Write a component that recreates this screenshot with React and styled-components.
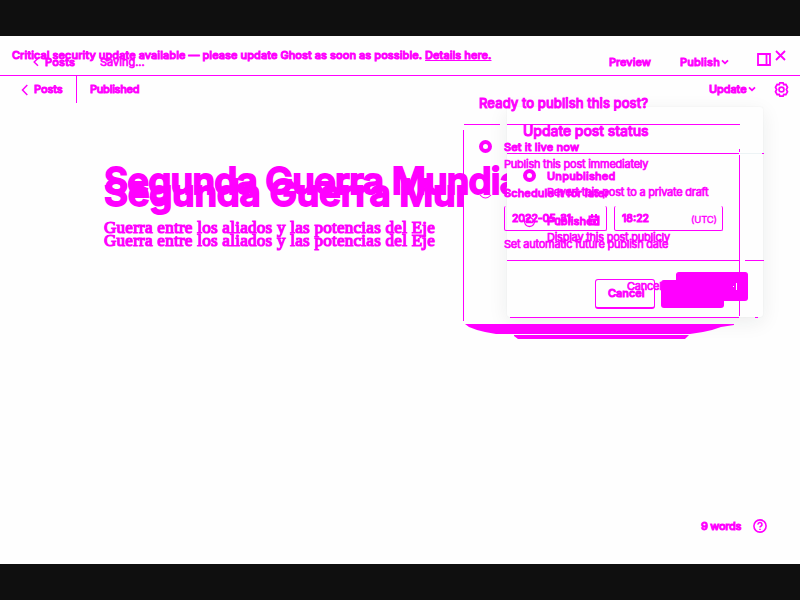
import React from "react";
import styled, { createGlobalStyle } from "styled-components";

const ink = "#ff00ff";

const Global = createGlobalStyle`
  * { box-sizing: border-box; }
  body { margin: 0; background: #fff; overflow: hidden; }
`;

const Page = styled.div`
  width: 800px;
  height: 600px;
  border: solid #0f0f0f;
  border-width: 36px 0;
  background: #fefefe;
  color: ${ink};
  font-family: Inter, "Liberation Sans", sans-serif;
  display: grid;
  overflow: hidden;
`;

const Layer = styled.main`
  grid-area: 1 / 1;
  position: relative;
  width: 800px;
  height: 528px;
  display: flex;
  flex-direction: column;
`;

const Row = styled.div`
  display: flex;
  align-items: center;
  flex: none;
  height: ${(p) => p.$h}px;
  margin-top: ${(p) => p.$mt || 0}px;
  padding-left: ${(p) => p.$x || 0}px;
`;

const Label = styled.span`
  flex: none;
  width: ${(p) => (p.$w ? `${p.$w}px` : "auto")};
  margin-left: ${(p) => p.$ml || 0}px;
  font-size: ${(p) => p.$size || 11}px;
  font-weight: ${(p) => p.$weight || 500};
  letter-spacing: ${(p) => p.$ls ?? 0.1}px;
  -webkit-text-stroke: ${(p) => p.$stroke ?? 0.95}px ${ink};
  line-height: 1;
  white-space: nowrap;
`;

const Hint = styled(Label).attrs({ $weight: 400, $stroke: 0.7, $ls: -0.24 })``;

const Link = styled.a`
  text-decoration: underline;
  text-decoration-thickness: 1px;
  text-underline-offset: 1px;
`;

const Title = styled.h1`
  flex: none;
  width: ${(p) => p.$w}px;
  height: 48px;
  margin: ${(p) => p.$mt}px 0 0 104px;
  overflow: hidden;
  white-space: nowrap;
  font-size: 37px;
  line-height: 48px;
  font-weight: 600;
  letter-spacing: ${(p) => p.$ls}px;
  -webkit-text-stroke: 1.8px ${ink};
`;

const Excerpt = styled.p`
  margin: ${(p) => p.$mt}px 0 0 104px;
  font-family: "Liberation Serif", serif;
  font-size: 17px;
  line-height: 20px;
  letter-spacing: 0.27px;
  white-space: nowrap;
  -webkit-text-stroke: 1.2px ${ink};
`;

const Rule = styled.div`
  flex: none;
  height: 1px;
  width: ${(p) => p.$w}px;
  margin-left: ${(p) => p.$ml || 0}px;
  background: ${(p) => p.$tone || ink};
`;

const Divider = styled.i`
  flex: none;
  align-self: flex-start;
  width: 1px;
  height: 27px;
  background: ${ink};
`;

const Icon = styled.svg`
  flex: none;
  display: block;
  margin-left: ${(p) => p.$ml || 0}px;
  margin-bottom: ${(p) => p.$mb || 0}px;
  fill: none;
  stroke: ${ink};
  stroke-width: ${(p) => p.$sw || 1.5};
`;

const StatusPanel = styled.section`
  position: absolute;
  left: 507px;
  top: 71px;
  width: 256px;
  height: 210px;
  display: flex;
  flex-direction: column;
  background: #fefefe;
  border-radius: 3px;
  box-shadow: 0 5px 20px rgba(20, 35, 35, 0.08), 0 0 2px rgba(20, 35, 35, 0.06);
`;

const PublishPanel = styled.section`
  position: absolute;
  left: 463px;
  top: 54px;
  width: 277px;
  height: 232px;
  display: flex;
  flex-direction: column;
`;

const Edge = styled.i`
  position: absolute;
  width: 1px;
  left: ${(p) => p.$x}px;
  top: ${(p) => p.$y}px;
  height: ${(p) => p.$h}px;
  background: ${ink};
`;

const Shadow = styled.svg`
  position: absolute;
  left: 0;
  top: 233px;
  fill: ${ink};
`;

const Radio = styled.i`
  flex: none;
  width: 13px;
  height: 13px;
  margin-top: ${(p) => p.$lift || 0}px;
  border: 4px solid ${ink};
  border-radius: 50%;
`;

const Field = styled.div`
  flex: none;
  display: flex;
  align-items: center;
  width: ${(p) => p.$w}px;
  height: 25px;
  padding-top: 3px;
  margin-left: ${(p) => p.$ml || 0}px;
  border: 1px solid ${ink};
  border-top: 0;
  border-radius: 2px;
`;

const Button = styled.button`
  flex: none;
  display: flex;
  align-items: center;
  width: ${(p) => p.$w}px;
  height: ${(p) => p.$h || 30}px;
  margin: 0 0 0 ${(p) => p.$ml || 0}px;
  padding: 0;
  color: ${ink};
  font-family: inherit;
  border: 1px solid ${ink};
  border-bottom-width: 2px;
  border-radius: 3px;
  background: ${(p) => (p.$solid ? ink : "transparent")};
`;

const Glint = styled.i`
  width: 1px;
  height: ${(p) => p.$h}px;
  margin-left: ${(p) => p.$ml}px;
  background: #fff;
`;

const Left = ({ big, ...rest }) => (
  <Icon width="8" height="12" viewBox="0 0 8 12" $sw={1.5} {...rest}>
    <path d={big ? "M6.300 1 1.500 6l4.800 5" : "M6 2.300 2.200 6 6 9.700"} />
  </Icon>
);

const Down = (props) => (
  <Icon width="8" height="6" viewBox="0 0 8 6" $sw={1.8} {...props}>
    <path d="m1 1.300 3 3 3-3" />
  </Icon>
);

const StatusScreen = () => (
  <Layer>
    <Row $h={39} $x={12}>
      <Label $w={763} $ls={0.05}>
        Critical security update available — please update Ghost as soon as possible. <Link>Details here.</Link>
      </Label>
      <Icon width="11" height="11" viewBox="0 0 11 11" $sw={1.8}>
        <path d="m1 1 9 9m0-9-9 9" />
      </Icon>
    </Row>
    <Rule $w={800} />
    <Row $h={27} $x={21}>
      <Left big />
      <Label $ml={5} $w={42} $ls={-0.1}>Posts</Label>
      <Divider />
      <Label $ml={13} $w={619} $ls={-0.28}>Published</Label>
      <Label $w={39} $ls={-0.1}>Update</Label>
      <Down $mb={1} />
      <Icon $ml={18} $mb={1} width="15" height="15" viewBox="0 0 14 14" $sw={1.6}>
        <circle cx="7" cy="7" r="2.300" />
        <path d="m5.500.8 3 0 .6 1.600 2-.1 1.500 2.600-1.100 2.100 1.100 2.100-1.500 2.600-2-.1-.6 1.600h-3l-.6-1.600-2 .1-1.500-2.600L2.500 7 1.400 4.900l1.500-2.600 2 .1z" />
      </Icon>
    </Row>
    <Title $mt={54} $w={403} $ls={-0.84}>Segunda Guerra Mundial</Title>
    <Excerpt $mt={13}>Guerra entre los aliados y las potencias del Eje</Excerpt>
    <Row $mt={280} $h={16} $x={701}>
      <Label $w={52} $ls={-0.3}>9 words</Label>
      <Icon width="14" height="14" viewBox="0 0 14 14" $sw={1.6}>
        <circle cx="7" cy="7" r="6.100" />
        <path d="M5 5.600a2 2 0 1 1 2.900 1.700Q7 7.800 7 8.600M7 9.800v1.200" />
      </Icon>
    </Row>
    <StatusPanel>
      <Row $mt={1} $h={45} $x={16}>
        <Label $size={14} $ls={-0.05}>Update post status</Label>
      </Row>
      <Row $h={1}>
        <Rule $w={232} />
        <Rule $w={23} $tone="#edf3f5" />
        <Rule $w={2} />
      </Row>
      <Row $mt={13} $h={18} $x={16}>
        <Radio $lift={-1} />
        <Label $ml={11} $ls={0.2}>Unpublished</Label>
      </Row>
      <Row $h={14} $x={40}>
        <Hint>Revert this post to a private draft</Hint>
      </Row>
      <Row $mt={13} $h={18} $x={16}>
        <Icon width="13" height="14" viewBox="0 0 13 14" $sw={1.3}>
          <path d="M1.500 5C-.5 15 13.500 15 11.500 5M3 5.500Q6.500 1 10 5.500M3 8.500h7" />
        </Icon>
        <Label $ml={11}>Published</Label>
      </Row>
      <Row $h={14} $x={40}>
        <Hint>Display this post publicly</Hint>
      </Row>
      <Row $mt={16} $h={1}>
        <Rule $w={232} />
        <Rule $w={19} $ml={6} />
      </Row>
      <Row $mt={11} $h={29} $x={120}>
        <Hint $w={49}>Cancel</Hint>
        <Button $solid $w={72} $h={29}>
          <Glint $ml={56} $h={1} />
          <Glint $ml={2} $h={7} />
        </Button>
      </Row>
      <Row $mt={16} $h={1} $x={3}>
        <Rule $w={229} />
        <Rule $w={3} $ml={16} />
      </Row>
    </StatusPanel>
  </Layer>
);

const PublishScreen = () => (
  <Layer>
    <Row $mt={14} $h={24} $x={32}>
      <Left />
      <Label $ml={5} $w={55} $ls={0.2}>Posts</Label>
      <Label $weight={400} $w={509} $stroke={0.7} $ls={0}>Saving...</Label>
      <Label $w={71} $ls={0}>Preview</Label>
      <Label $w={41} $ls={0.2}>Publish</Label>
      <Down />
      <Icon $ml={28} $mb={6} width="14" height="13" viewBox="0 0 14 13" $sw={1.8}>
        <path d="M1 1h12v11H1zM9.500 1v11" />
      </Icon>
    </Row>
    <Title $mt={95} $w={360} $ls={-0.33}>Segunda Guerra Mundial</Title>
    <Excerpt $mt={14}>Guerra entre los aliados y las potencias del Eje</Excerpt>
    <PublishPanel>
      <Row $h={27} $x={16}>
        <Label $size={13} $ls={0.08}>Ready to publish this post?</Label>
      </Row>
      <Row $mt={7} $h={1}>
        <Rule $w={36} $ml={1} />
        <Rule $w={233} $ml={7} />
      </Row>
      <Row $mt={13} $h={18} $x={16}>
        <Radio $lift={-1} />
        <Label $ml={12} $ls={0.15}>Set it live now</Label>
      </Row>
      <Row $h={16} $x={41}>
        <Hint>Publish this post immediately</Hint>
      </Row>
      <Row $mt={12} $h={18} $x={16}>
        <Icon width="13" height="16" viewBox="0 0 13 16" $sw={1.1}>
          <path d="M1 10q5.500 6 11 0" />
        </Icon>
        <Label $ml={12}>Schedule it for later</Label>
      </Row>
      <Row $mt={4} $h={25} $x={41}>
        <Field $w={103}>
          <Label $ml={7} $w={76} $size={10.5} $ls={-0.1}>2022-05-31</Label>
          <Icon width="12" height="12" viewBox="0 0 12 12" $sw={2}>
            <path d="M1.500 2.500h9v8h-9zM1 5.500h10M4 0v4M8 0v4M5 8h3" />
          </Icon>
        </Field>
        <Field $w={109} $ml={7}>
          <Label $ml={7} $w={69} $size={10.5} $ls={0}>18:22</Label>
          <Label $size={9.5} $weight={400} $stroke={0.4} $ls={-0.2}>(UTC)</Label>
        </Field>
      </Row>
      <Row $mt={5} $h={16} $x={41}>
        <Hint>Set automatic future publish date</Hint>
      </Row>
      <Row $mt={27} $h={30} $x={132}>
        <Button $w={60}><Label $ml={12} $ls={0}>Cancel</Label></Button>
        <Button $solid $w={63} $h={28} $ml={6} aria-label="Schedule" />
      </Row>
      <Edge $x={0} $y={40} $h={191} />
      <Edge $x={276} $y={59} $h={3} />
      <Edge $x={276} $y={65} $h={161} />
      <Shadow width="277" height="17" viewBox="0 0 277 17">
        <path d="M2 1H271V2L258 4 249 7 240 9 227 11H33L22 9 14 7 6 4ZM51 12H226L222 16H55L51 13Z" />
      </Shadow>
    </PublishPanel>
  </Layer>
);

export default function App() {
  return (
    <>
      <Global />
      <Page>
        <StatusScreen />
        <PublishScreen />
      </Page>
    </>
  );
}
